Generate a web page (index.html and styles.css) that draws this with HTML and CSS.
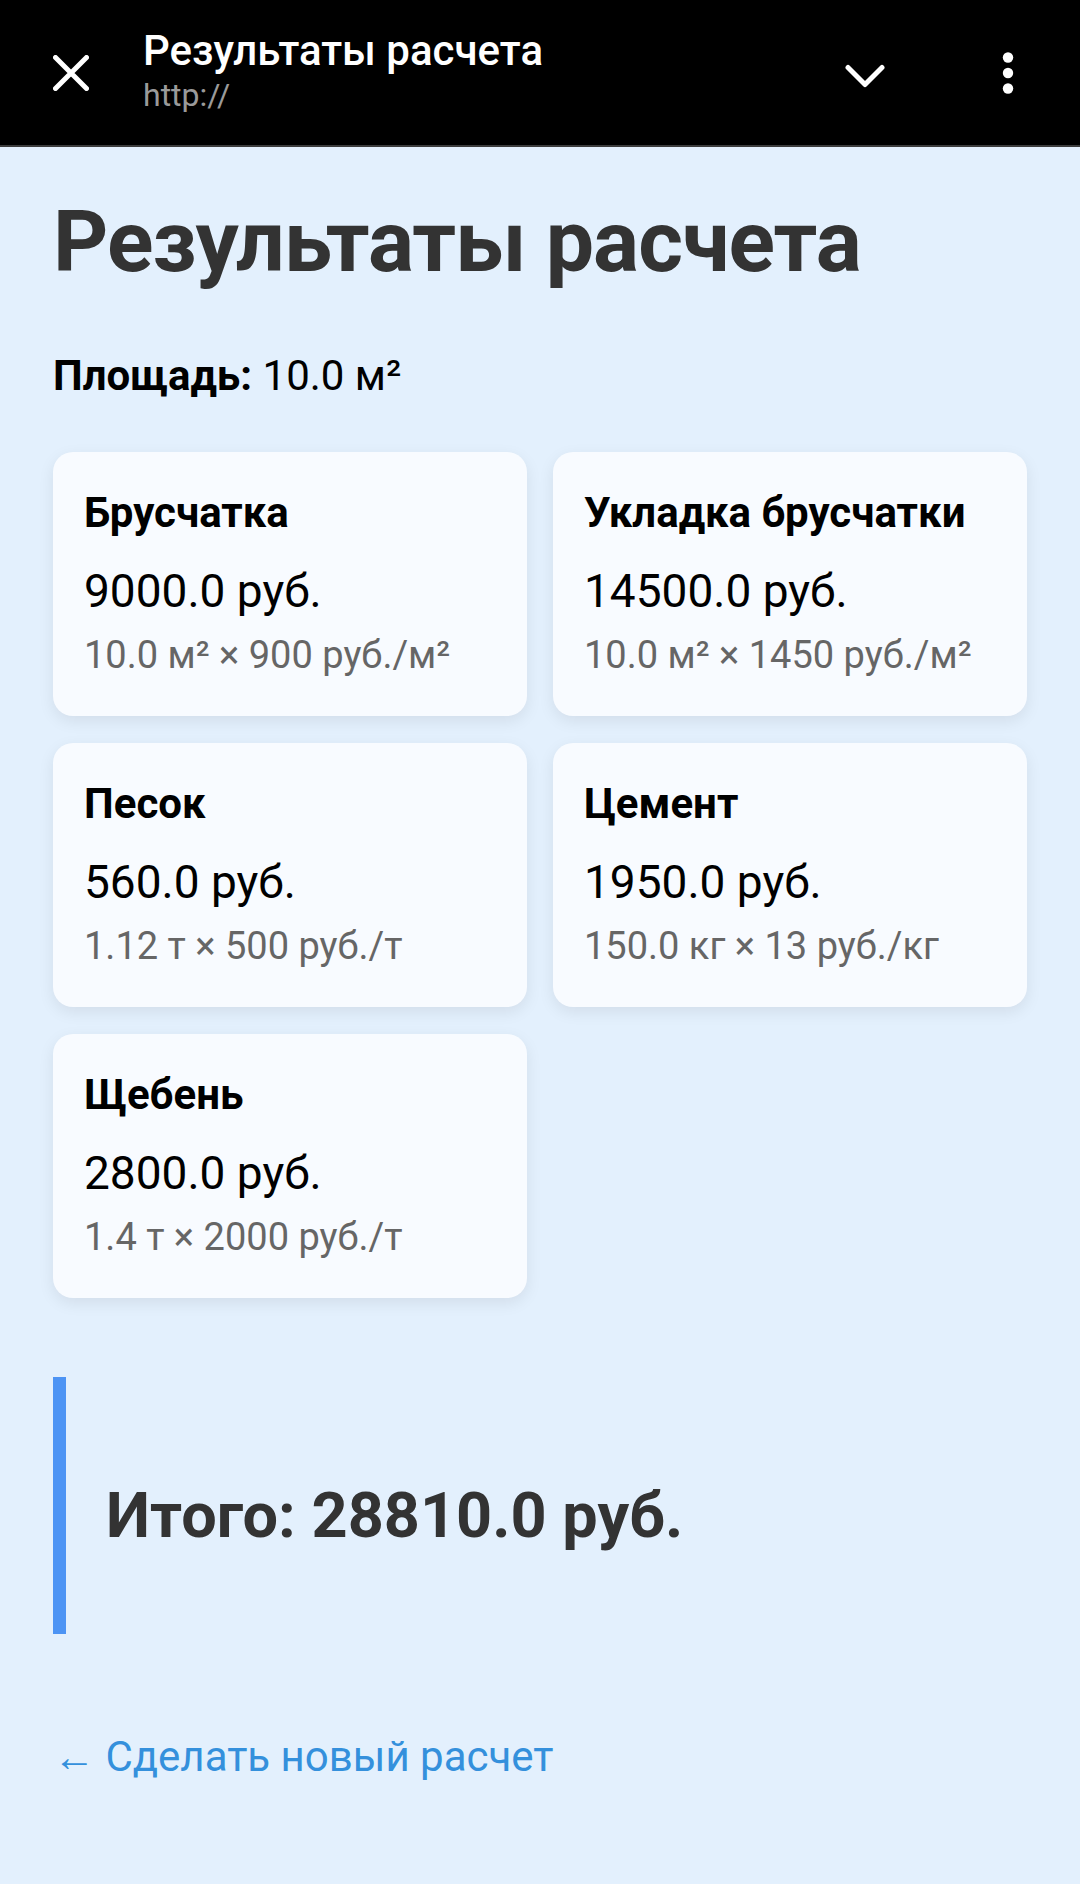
FILE: index.html
```html
<!DOCTYPE html>
<html lang="ru">
<head>
    <meta charset="UTF-8">
    <meta name="viewport" content="width=device-width, initial-scale=1.0">
    <title>Результаты расчета</title>
    <link rel="stylesheet" href="styles.css">
</head>
<body>
    <header class="toolbar">
        <svg class="tb-close" width="36" height="36" viewBox="0 0 36 36">
            <path d="M2.5 2.5 L33.5 33.5 M33.5 2.5 L2.5 33.5" stroke="#fff" stroke-width="5" stroke-linecap="round" fill="none"/>
        </svg>
        <div class="tb-titles">
            <div class="tb-title">Результаты расчета</div>
            <div class="tb-url">http://</div>
        </div>
        <svg class="tb-chevron" width="40" height="26" viewBox="0 0 40 26">
            <polyline points="3,4.5 20,21.5 37,4.5" stroke="#fff" stroke-width="5" stroke-linecap="round" stroke-linejoin="round" fill="none"/>
        </svg>
        <svg class="tb-menu" width="12" height="42" viewBox="0 0 12 42">
            <circle cx="6" cy="5.5" r="5.2" fill="#fff"/>
            <circle cx="6" cy="21" r="5.2" fill="#fff"/>
            <circle cx="6" cy="36.5" r="5.2" fill="#fff"/>
        </svg>
    </header>

    <main class="page">
        <h1>Результаты расчета</h1>
        <p class="area"><b>Площадь:</b> 10.0 м²</p>

        <div class="cards">
            <div class="card">
                <div class="card-title">Брусчатка</div>
                <div class="card-sum">9000.0 руб.</div>
                <div class="card-calc">10.0 м² × 900 руб./м²</div>
            </div>
            <div class="card">
                <div class="card-title">Укладка брусчатки</div>
                <div class="card-sum">14500.0 руб.</div>
                <div class="card-calc">10.0 м² × 1450 руб./м²</div>
            </div>
            <div class="card">
                <div class="card-title">Песок</div>
                <div class="card-sum">560.0 руб.</div>
                <div class="card-calc">1.12 т × 500 руб./т</div>
            </div>
            <div class="card">
                <div class="card-title">Цемент</div>
                <div class="card-sum">1950.0 руб.</div>
                <div class="card-calc">150.0 кг × 13 руб./кг</div>
            </div>
            <div class="card">
                <div class="card-title">Щебень</div>
                <div class="card-sum">2800.0 руб.</div>
                <div class="card-calc">1.4 т × 2000 руб./т</div>
            </div>
        </div>

        <div class="total">
            <h2>Итого: 28810.0 руб.</h2>
        </div>

        <a class="back" href="#"><span class="arrow">←</span> Сделать новый расчет</a>
    </main>
</body>
</html>
```

FILE: styles.css
```css
body {
    margin: 0;
    font-family: Roboto, "Noto Sans", sans-serif;
    background: #e3f0fd;
    color: #000;
}
.toolbar {
    height: 145px;
    background: #000;
    border-bottom: 2px solid #3c3c3c;
    display: flex;
    align-items: flex-start;
    padding: 0 66px 0 53px;
}
.tb-close {
    margin-top: 55px;
}
.tb-titles {
    margin: 27px 0 0 54px;
    flex: 1;
}
.tb-title {
    font-size: 42px;
    line-height: 48px;
    font-weight: 500;
    color: #fff;
}
.tb-url {
    font-size: 32px;
    line-height: 38px;
    color: #9a9a9a;
    margin-top: 1px;
}
.tb-chevron {
    margin-top: 63px;
    margin-right: 117px;
}
.tb-menu {
    margin-top: 52px;
}
.page {
    padding: 0 53px;
}
h1 {
    margin: 43px 0 0;
    font-size: 86px;
    line-height: 104px;
    letter-spacing: -1px;
    font-weight: 700;
    color: #333;
}
.area {
    margin: 57px 0 0;
    font-size: 42px;
    line-height: 50px;
}
.cards {
    margin-top: 51px;
    display: grid;
    grid-template-columns: 1fr 1fr;
    column-gap: 26px;
    row-gap: 27px;
}
.card {
    background: #f8fbff;
    border-radius: 20px;
    padding: 36px 31px 39px;
    box-shadow: 0 5px 16px rgba(0, 0, 0, 0.08);
}
.card-title {
    font-size: 42px;
    line-height: 50px;
    font-weight: 700;
}
.card-sum {
    margin-top: 25px;
    font-size: 46px;
    line-height: 56px;
}
.card-calc {
    margin-top: 14px;
    font-size: 38px;
    line-height: 44px;
    color: #666;
}
.total {
    margin-top: 79px;
    border-left: 13px solid #4d94f4;
    padding: 100px 0 79px 40px;
}
.total h2 {
    margin: 0;
    font-size: 63px;
    line-height: 78px;
    font-weight: 700;
    color: #333;
}
.back {
    display: inline-block;
    margin-top: 98px;
    font-size: 42px;
    line-height: 50px;
    color: #3490dc;
    text-decoration: none;
}
```
